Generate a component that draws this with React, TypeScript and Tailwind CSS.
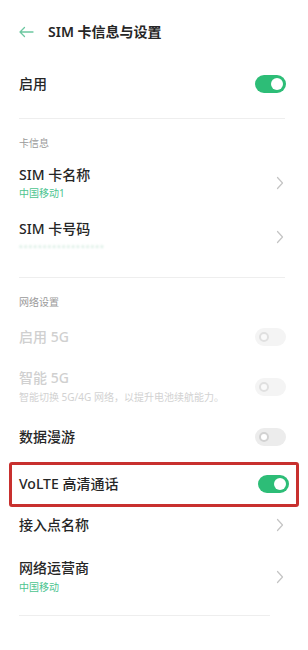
import React from "react";

const font = { fontFamily: '"Noto Sans", "Noto Sans CJK SC", sans-serif' };

const Toggle = ({ on, disabled }: { on?: boolean; disabled?: boolean }) =>
  on ? (
    <div className="flex h-[18px] w-[31px] items-center justify-end rounded-full bg-[#2dbd77] pr-[3px]">
      <div className="h-[12px] w-[12px] rounded-full bg-white" />
    </div>
  ) : (
    <div
      className={`flex h-[18px] w-[31px] items-center rounded-full pl-[4px] ${
        disabled ? "bg-[#f4f4f4]" : "bg-[#ececec]"
      }`}
    >
      <div
        className={`h-[10px] w-[10px] rounded-full border-[2px] ${
          disabled ? "border-[#e0e0e0] bg-[#fafafa]" : "border-[#d2d2d2] bg-white"
        }`}
      />
    </div>
  );

const Chevron = () => (
  <svg width="8" height="14" viewBox="0 0 8 14" fill="none">
    <path d="M1.5 1.5L6.5 7L1.5 12.5" stroke="#c4c4c4" strokeWidth="1.2" strokeLinecap="round" strokeLinejoin="round" />
  </svg>
);

const Divider = ({ className }: { className: string }) => (
  <div className={`h-px bg-[#eeeeee] ${className}`} />
);

const Label = ({ text, className }: { text: string; className: string }) => (
  <div className={`px-[19px] text-[10px] leading-[14px] text-[#9a9a9a] ${className}`}>{text}</div>
);

const App = () => {
  return (
    <div className="h-[650px] w-[308px] overflow-hidden bg-white text-[#262626]" style={font}>
      {/* header */}
      <div className="flex h-[64px] items-center gap-[14px] pl-[18px]">
        <svg width="16" height="12" viewBox="0 0 16 12" fill="none">
          <path d="M15 6H2M6.5 1.5L2 6L6.5 10.5" stroke="#6cc7a0" strokeWidth="1.3" strokeLinecap="round" strokeLinejoin="round" />
        </svg>
        <span className="text-[14px] font-semibold leading-[18px]">SIM 卡信息与设置</span>
      </div>

      <div className="flex h-[40px] items-center justify-between pl-[19px] pr-[22px]">
        <span className="text-[14px] font-medium leading-[18px]">启用</span>
        <Toggle on />
      </div>
      <Divider className="mx-[19px] mt-[14px] w-[266px]" />

      <Label text="卡信息" className="mt-[17px]" />

      <div className="mt-[16px] flex items-center justify-between pl-[19px] pr-[24px]">
        <div className="flex flex-col">
          <span className="text-[14px] font-medium leading-[18px]">SIM 卡名称</span>
          <span className="mt-[2px] text-[10px] leading-[14px] text-[#4cc48f]">中国移动1</span>
        </div>
        <Chevron />
      </div>

      <div className="mt-[20px] flex items-center justify-between pl-[19px] pr-[24px]">
        <div className="flex flex-col">
          <span className="text-[14px] font-medium leading-[18px]">SIM 卡号码</span>
          <span className="mt-[2px] text-[10px] leading-[14px] tracking-[1px] text-[#cfe9dd] blur-[1px]">
            ••••••••••••••••••
          </span>
        </div>
        <Chevron />
      </div>
      <Divider className="mx-[19px] mt-[23px] w-[266px]" />

      <Label text="网络设置" className="mt-[17px]" />

      <div className="mt-[19px] flex items-center justify-between pl-[19px] pr-[22px]">
        <span className="text-[14px] font-medium leading-[18px] text-[#d0d0d0]">启用 5G</span>
        <Toggle disabled />
      </div>

      <div className="mt-[23px] flex items-center justify-between pl-[19px] pr-[22px]">
        <div className="flex flex-col">
          <span className="text-[14px] font-medium leading-[18px] text-[#d0d0d0]">智能 5G</span>
          <span className="mt-[3px] text-[10px] leading-[14px] text-[#d2d2d2]">
            智能切换 5G/4G 网络，以提升电池续航能力。
          </span>
        </div>
        <Toggle disabled />
      </div>

      <div className="mt-[24px] flex items-center justify-between pl-[19px] pr-[22px]">
        <span className="text-[14px] font-medium leading-[18px]">数据漫游</span>
        <Toggle />
      </div>

      <div className="mx-[9px] mt-[16px] flex h-[45px] items-center justify-between rounded-[3px] border-[3px] border-[#c8302e] pb-[2px] pl-[7px] pr-[7px]">
        <span className="text-[14px] font-medium leading-[18px]">VoLTE 高清通话</span>
        <Toggle on />
      </div>

      <div className="mt-[9px] flex items-center justify-between pl-[19px] pr-[24px]">
        <span className="text-[14px] font-medium leading-[18px]">接入点名称</span>
        <Chevron />
      </div>

      <div className="mt-[25px] flex items-center justify-between pl-[19px] pr-[24px]">
        <div className="flex flex-col">
          <span className="text-[14px] font-medium leading-[18px]">网络运营商</span>
          <span className="mt-[3px] text-[10px] leading-[14px] text-[#4cc48f]">中国移动</span>
        </div>
        <Chevron />
      </div>
      <Divider className="mx-[19px] mt-[21px] w-[251px]" />
    </div>
  );
};

export default App;
